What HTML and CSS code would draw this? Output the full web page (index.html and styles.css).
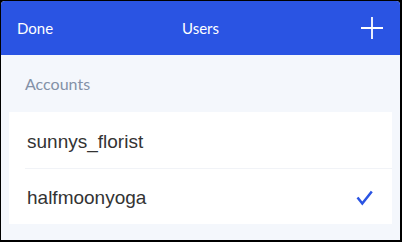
FILE: index.html
```html
<!DOCTYPE html>
<html lang="en">
<head>
<meta charset="utf-8">
<title>Users</title>
<link rel="stylesheet" href="styles.css">
</head>
<body>
<div class="app">
  <header class="topbar">
    <span class="done">Done</span>
    <span class="title">Users</span>
    <span class="add" aria-label="Add">
      <svg width="24" height="24" viewBox="0 0 24 24"><path d="M12 1V23M1 12H23" stroke="#fff" stroke-width="1.8" fill="none"/></svg>
    </span>
  </header>
  <div class="section">Accounts</div>
  <ul class="list">
    <li class="item"><span class="name">sunnys_florist</span></li>
    <li class="item"><span class="name">halfmoonyoga</span>
      <svg class="check" width="17" height="16" viewBox="0 0 17 16"><path d="M1.5 7.5L6.3 13.5L15.8 1.5" stroke="#2a54e3" stroke-width="2.5" fill="none" stroke-linecap="butt" stroke-linejoin="miter"/></svg>
    </li>
  </ul>
</div>
</body>
</html>
```
FILE: styles.css
```css
html, body {
  margin: 0;
  padding: 0;
  background: #000;
}
.app {
  margin: 1px 2px 2px 1px;
  height: 239px;
  background: #f4f7fc;
  border-radius: 4px 4px 0 0;
  overflow: hidden;
  font-family: Lato, "Liberation Sans", sans-serif;
}
.topbar {
  height: 54px;
  background: #2a54e3;
  color: #fff;
  display: grid;
  grid-template-columns: 1fr auto 1fr;
  align-items: center;
  padding: 0 16px 0 16px;
  font-size: 15px;
}
.done { justify-self: start; }
.title { justify-self: center; }
.add {
  justify-self: end;
  display: flex;
  width: 24px;
  height: 24px;
  margin-top: -1px;
}
.section {
  height: 57px;
  line-height: 57px;
  padding-left: 24px;
  font-size: 16px;
  color: #8391a7;
}
.list {
  list-style: none;
  margin: 0 8px;
  padding: 0 0 0 16px;
  background: #fff;
}
.item {
  height: 56px;
  display: flex;
  align-items: center;
  padding: 3px 19px 0 2px;
  box-sizing: border-box;
  font-family: "Liberation Sans", Arial, sans-serif;
  font-size: 19px;
  color: #333;
}
.item + .item {
  border-top: 1px solid #f1f3f7;
}
.name { flex: 1; }
.check { display: block; }
```
